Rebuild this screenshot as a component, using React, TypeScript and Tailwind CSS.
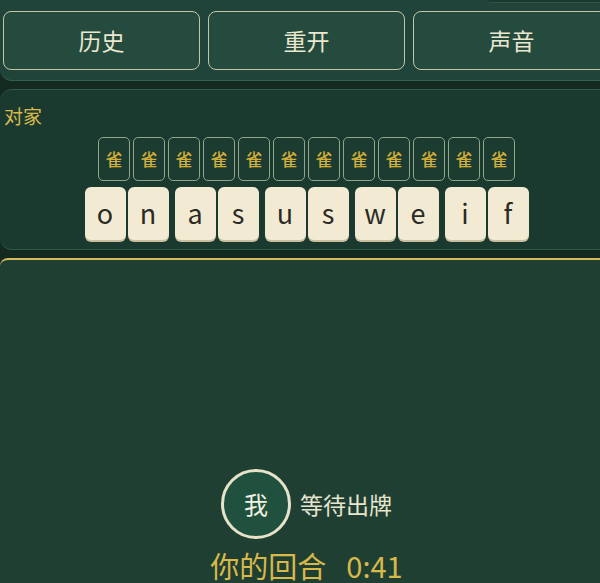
import React from 'react';

const FONT = { fontFamily: '"Noto Sans CJK SC", "Noto Sans", sans-serif' };

const LETTER_PAIRS = [['o', 'n'], ['a', 's'], ['u', 's'], ['w', 'e'], ['i', 'f']];
const BACK_TILES = Array.from({ length: 12 });

export default function App() {
  return (
    <div className="w-[600px] h-[583px] overflow-hidden bg-[#142a21]" style={FONT}>
      <div className="w-[613px] flex flex-col">
        {/* Top bar with controls */}
        <div className="bg-[#21443a] border-b border-[#33604f] rounded-b-xl pb-[10px]">
          <div className="flex justify-end h-[11px]">
            <div className="w-[125px] h-[3px] rounded-b-lg bg-[#1b3a2f] border-b border-[#2e5446]" />
          </div>
          <div className="flex gap-[8px] px-[3px]">
            {['历史', '重开', '声音'].map(label => (
              <button
                key={label}
                className="flex-1 h-[59px] rounded-lg border border-[#c3c6a4] bg-[#244b3d] text-[23px] text-[#ebe7cf] flex items-center justify-center"
              >
                {label}
              </button>
            ))}
          </div>
        </div>

        {/* Opponent panel */}
        <div className="mt-[8px] h-[161px] bg-[#1b3a2f] border-y border-[#2f5a4a] rounded-xl px-[4px] pt-[14px]">
          <div className="text-[19px] leading-[24px] text-[#d9b84a]">对家</div>
          <div className="flex justify-center gap-[3px] mt-[9px]">
            {BACK_TILES.map((_, i) => (
              <div
                key={i}
                className="w-[32px] h-[44px] rounded-[5px] border border-[#8fa68b] bg-[#1c3c31] flex items-center justify-center text-[17px] font-medium text-[#d4af3a]"
              >
                雀
              </div>
            ))}
          </div>
          <div className="flex justify-center gap-[6px] mt-[6px]">
            {LETTER_PAIRS.map((pair, i) => (
              <div key={i} className="flex gap-[2px]">
                {pair.map((ch, j) => (
                  <div
                    key={j}
                    className="w-[41px] h-[53px] rounded-[6px] bg-[#f3ead3] shadow-[0_2px_0_#c9bf9f] flex items-center justify-center text-[27px] text-[#2b2b26]"
                  >
                    {ch}
                  </div>
                ))}
              </div>
            ))}
          </div>
        </div>

        {/* Main play area */}
        <div className="mt-[8px] h-[330px] bg-[#1f3f33] border-t-2 border-[#d8b95c] rounded-tl-lg flex flex-col items-center pt-[209px]">
          <div className="flex items-center gap-[9px]">
            <div className="w-[70px] h-[70px] rounded-full border-[3px] border-[#e6e3c9] bg-[#20503e] flex items-center justify-center text-[24px] text-[#f2f0e2]">
              我
            </div>
            <span className="text-[23px] text-[#e8e5cf]">等待出牌</span>
          </div>
          <div className="flex items-center gap-[20px] mt-[6px] text-[29px] leading-[40px] text-[#d9b84a]">
            <span>你的回合</span>
            <span>0:41</span>
          </div>
        </div>
      </div>
    </div>
  );
}
